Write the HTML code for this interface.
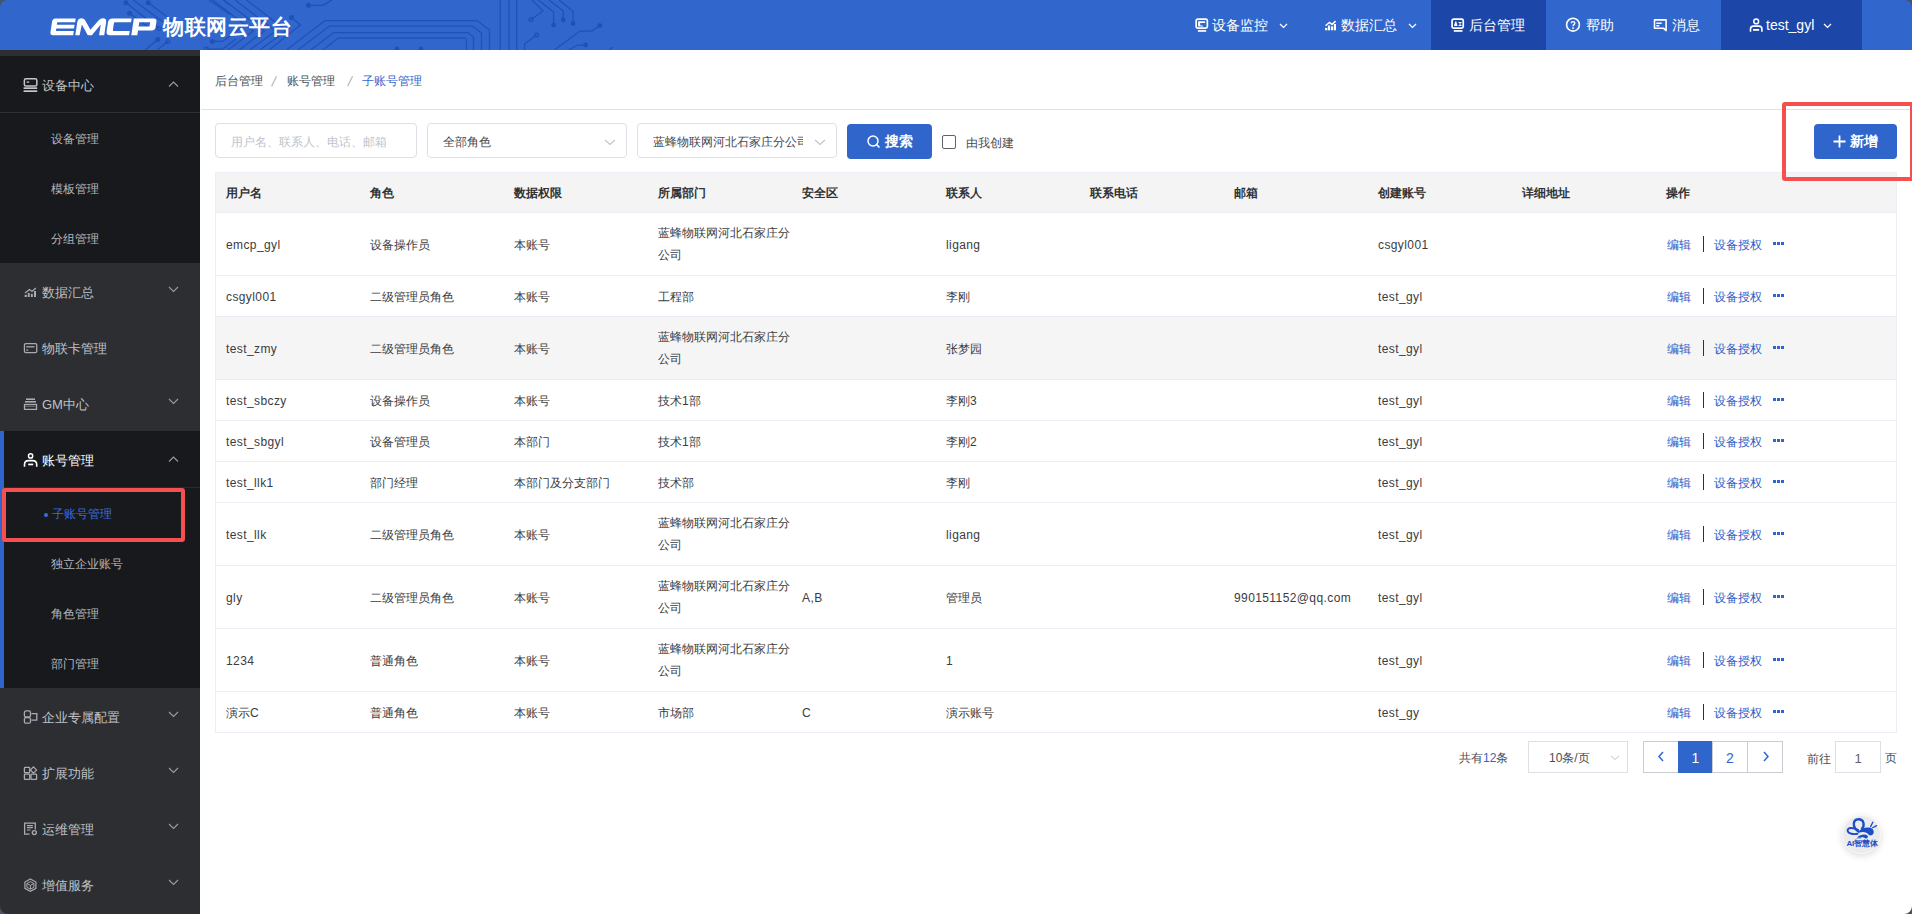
<!DOCTYPE html><html><head><meta charset="utf-8"><style>
*{margin:0;padding:0;box-sizing:border-box}
html,body{width:1912px;height:914px;overflow:hidden;background:#44546a;font-family:"Liberation Sans",sans-serif;}
.abs{position:absolute}
#hdr{position:absolute;left:0;top:0;width:1912px;height:50px;background:#3166cd;border-radius:8px 8px 0 0;overflow:hidden}
.nav{position:absolute;top:0;height:50px;color:#fff;font-size:14px;font-weight:500;white-space:nowrap}
.nav.act{background:#1c47a8}
.nav span{position:absolute;top:0;line-height:50px}
.nav svg{position:absolute}
#side{position:absolute;left:0;top:50px;width:200px;height:864px;background:#2d2e32;overflow:hidden;border-radius:0 0 0 8px}
#side>svg{position:absolute;z-index:2}
.mi{position:absolute;left:0;width:200px;height:56px;color:#bfc1c7;font-size:13px;line-height:56px}
.mi .t{position:absolute;left:42px;top:2px}
.mi svg{position:absolute}
.si{position:absolute;left:0;width:200px;height:50px;color:#b4b6bc;font-size:12px;line-height:50px}
.si .t{position:absolute;left:51px;top:1px}
#main{position:absolute;left:200px;top:50px;width:1712px;height:864px;background:#fff;border-radius:0 0 8px 0;overflow:hidden}
.bc{position:absolute;top:1px;font-size:12px;line-height:60px;color:#4d4f55;white-space:nowrap}
.inp{position:absolute;top:73px;height:35px;border:1px solid #dcdfe6;border-radius:4px;background:#fff;font-size:12px;line-height:36px;color:#45474d;overflow:hidden;white-space:nowrap}
.btn{position:absolute;top:74px;height:35px;background:#3066cc;border-radius:4px;color:#fff;font-size:14px;font-weight:bold;white-space:nowrap}
.btn span{position:absolute;top:0;line-height:35px}
.btn svg{position:absolute}
#tbl{position:absolute;left:15px;top:122px;width:1682px;border-left:1px solid #ebeef5;border-right:1px solid #ebeef5;border-top:1px solid #ebeef5}
.row{position:relative;width:100%;border-bottom:1px solid #ebeef5;background:#fff}
.row.h{background:#f4f4f5}
.row.hov{background:#f5f5f6}
.c{position:absolute;top:0;font-size:12px;color:#3a3c42;line-height:22px;white-space:nowrap;margin-top:1px}
.lt{letter-spacing:0.4px}
.row.h .c{color:#303133;font-weight:bold}
.op{color:#2b5dc8}
.pg{position:absolute;top:691px;height:32px;border:1px solid #c9ccd2;background:#fff;font-size:14px;line-height:33px;text-align:center;color:#3066cc}
</style></head><body>
<div id="hdr">
<svg style="position:absolute;left:0;top:0" width="700" height="50" viewBox="0 0 700 50"><g fill="none" stroke="#1f51b9" stroke-width="1.25">
<path d="M126 2.8 L159 28.6"/>
<path d="M133.2 0 L170 27"/>
<path d="M148.3 2.8 L184 29.5"/>
<path d="M129.5 13.2 L150 28.6"/>
<path d="M157.7 39.5 L145.2 50"/>
<path d="M167.8 41.4 L157.1 50"/>
<path d="M212.3 41.4 H222.6 L246 24"/>
<path d="M206.5 49 H222.6 L236 39"/>
<path d="M209.2 0 L230 14.4 M223 0 L230 5"/>
<path d="M212.6 0 L253.2 30.9 L228 50"/>
<path d="M223.9 0 L264.4 30.9 L239 50"/>
<path d="M235.2 0 L275.5 30.9 L250 50"/>
<path d="M246.5 0 L286.2 30.6 L260 50"/>
<path d="M291.6 17.6 L300.4 25.1 L269 50"/>
<path d="M308.5 5.3 L323 5.3 L332 0"/>
<path d="M286.6 50 L325 20.5 H477 L489.5 30 V50"/>
<path d="M298 50 L329.4 26 H472.6 L481.5 33 V50"/>
<path d="M310.7 50 L333.8 32.5 H468 L473.5 37 V50"/>
<path d="M323 50 L338 38 H465.5 L466.5 41 V50"/>
<path d="M500.2 0 V50 M509 0 V50 M516.7 0 V50"/>
<path d="M532 0 L543 11 L531 19.5"/>
<path d="M538.4 0 L553.6 12 V25"/>
<path d="M549 0 L563.3 11 V20"/>
<path d="M559 0 L573 11.5 V23.5"/>
<path d="M536.7 35 L524.6 44 V50"/>
<path d="M599.8 25.6 L591.8 31 H580 L554.4 50"/>
<path d="M585.6 45 H577.6 L568.7 50"/>
<path d="M613 47 L609 50"/>
</g>
<g fill="#1f51b9">
<circle cx="126" cy="2.8" r="2.5"/><circle cx="148.3" cy="2.8" r="2.5"/><circle cx="129.5" cy="13.2" r="2.5"/><circle cx="157.7" cy="39.5" r="2.5"/><circle cx="212.3" cy="41.4" r="2.5"/><circle cx="291.6" cy="17.6" r="2.5"/><circle cx="308.5" cy="5.3" r="2.5"/>
<circle cx="553.6" cy="25" r="2.4"/><circle cx="563.3" cy="20" r="2.4"/><circle cx="573" cy="23.5" r="2.4"/><circle cx="599.8" cy="25.6" r="2.4"/><circle cx="585.6" cy="45" r="2.4"/><circle cx="397" cy="49" r="2.4"/><circle cx="421" cy="49" r="2.4"/>
</g>
<g fill="none" stroke="#1f51b9" stroke-width="1.25"><circle cx="159" cy="28.6" r="1.9"/><circle cx="167.8" cy="41.4" r="1.9"/><circle cx="206.5" cy="49" r="1.9"/><circle cx="531" cy="19.5" r="1.9"/><circle cx="536.7" cy="35" r="1.9"/></g>
</svg>

<svg style="position:absolute;left:0;top:0" width="300" height="50" viewBox="0 0 300 50"><g transform="translate(5.3 0) skewX(-8.53)" fill="#fff">
<path d="M53 18.4 H73.2 V22.3 H55.3 V24.8 H73 V28.6 H55.3 V31.1 H73.2 V35.3 H53 Q50 35.3 50 32.3 V21.4 Q50 18.4 53 18.4 Z"/>
<path d="M75.3 35.3 L75.3 22.5 Q75.3 18.2 79.3 18.2 Q81.8 18.2 83.2 20.8 L89.6 29.7 L96.3 20.6 Q97.8 18.2 100.5 18.2 Q104.2 18.2 104.2 22.5 L104.2 35.3 L99.1 35.3 L99.1 24.4 L91.9 35.3 L87.8 35.3 L80.2 24.4 L79.6 35.3 Z"/>
<path d="M110 18.4 H129.1 V22.3 H113.1 Q112.1 22.3 112.1 23.3 V30.1 Q112.1 31.1 113.1 31.1 H129.1 V35.3 H110 Q106 35.3 106 31.3 V22.4 Q106 18.4 110 18.4 Z"/>
<path fill-rule="evenodd" d="M131.3 35.3 V18.4 H151 Q154.4 18.4 154.4 21.8 V27 Q154.4 30.4 151 30.4 H137.3 V35.3 Z M137.3 22.3 H148.2 V26.5 H137.3 Z"/>
</g></svg>

<div class="abs" style="left:163px;top:0;line-height:54px;font-size:21px;font-weight:bold;color:#fff;letter-spacing:0.5px">物联网云平台</div>
<div class="nav" style="left:1175px;width:130px"><svg style="left:20px;top:18px" width="14" height="14" viewBox="0 0 14 14"><rect x="1.15" y="1.15" width="11.2" height="9" rx="1.6" fill="none" stroke="#fff" stroke-width="1.7"/><path d="M3.1 3.3 H10.1 V4.9 H5.2 V7.5 H7.9 V8.6 H3.1 Z" fill="#fff"/><rect x="2.9" y="12.1" width="8.3" height="1.7" fill="#fff"/></svg><span style="left:37px">设备监控</span><svg style="left:104px;top:23px" width="9" height="6" viewBox="0 0 9 6"><path d="M1 1 L4.5 4.5 L8 1" fill="none" stroke="#fff" stroke-width="1.2"/></svg></div>
<div class="nav" style="left:1305px;width:126px"><svg style="left:20px;top:20px" width="12" height="11" viewBox="0 0 12 11"><rect x="0.1" y="7.9" width="2.2" height="2.4" fill="#fff"/><rect x="2.9" y="5.5" width="2.2" height="4.8" fill="#fff"/><rect x="6" y="6.4" width="2.2" height="3.9" fill="#fff"/><rect x="8.9" y="4" width="2.1" height="6.3" fill="#fff"/><path d="M0.5 5.7 L4.4 2.4 L7.1 4.4 L10.6 1.1" fill="none" stroke="#fff" stroke-width="1.5"/></svg><span style="left:36px">数据汇总</span><svg style="left:103px;top:23px" width="9" height="6" viewBox="0 0 9 6"><path d="M1 1 L4.5 4.5 L8 1" fill="none" stroke="#fff" stroke-width="1.2"/></svg></div>
<div class="nav act" style="left:1431px;width:115px"><svg style="left:20px;top:18px" width="14" height="14" viewBox="0 0 14 14"><rect x="1.05" y="1.15" width="11.2" height="9" rx="1.6" fill="none" stroke="#fff" stroke-width="1.7"/><path d="M3 7.9 L4.2 3.6 H5.3 L6.5 7.9 Z" fill="#fff"/><path d="M7.6 3.9 H10.6 V4.9 H9.6 V6.9 H10.6 V7.9 H7.6 V6.9 H8.6 V4.9 H7.6 Z" fill="#fff"/><rect x="2.8" y="12.1" width="8.7" height="1.7" fill="#fff"/></svg><span style="left:38px">后台管理</span></div>
<div class="nav" style="left:1546px;width:87px"><svg style="left:19px;top:17px" width="16" height="16" viewBox="0 0 16 16"><circle cx="8" cy="7.7" r="6.4" fill="none" stroke="#fff" stroke-width="1.6"/><path d="M6.2 6.2 Q6.2 4.6 8 4.6 Q9.8 4.6 9.8 6.1 Q9.8 7 8.9 7.6 Q8 8.2 8 9.3" fill="none" stroke="#fff" stroke-width="1.4"/><rect x="7.2" y="10.3" width="1.6" height="1.6" fill="#fff"/></svg><span style="left:40px">帮助</span></div>
<div class="nav" style="left:1633px;width:88px"><svg style="left:20px;top:18px" width="15" height="14" viewBox="0 0 15 14"><path d="M1.5 1.9 H13.1 V12.6 L10.6 10.3 H1.5 Z" fill="none" stroke="#fff" stroke-width="1.6" stroke-linejoin="round"/><path d="M3.3 5.3 H8.7 M3.3 7.7 H6.3" stroke="#fff" stroke-width="1.5"/></svg><span style="left:39px">消息</span></div>
<div class="nav act" style="left:1721px;width:141px"><svg style="left:28px;top:17px" width="15" height="16" viewBox="0 0 15 16"><circle cx="7.2" cy="4.4" r="2.4" fill="none" stroke="#fff" stroke-width="1.5"/><path d="M1.5 14.8 V12 Q1.5 9.1 4.4 9.1 H10 Q12.9 9.1 12.9 12 V14.8" fill="none" stroke="#fff" stroke-width="1.6"/><rect x="4" y="12" width="6.1" height="1.8" fill="#fff"/></svg><span style="left:45px">test_gyl</span><svg style="left:102px;top:23px" width="9" height="6" viewBox="0 0 9 6"><path d="M1 1 L4.5 4.5 L8 1" fill="none" stroke="#fff" stroke-width="1.2"/></svg></div>
</div>
<div id="side">
<div class="abs" style="left:0;top:6px;width:200px;height:207px;background:#18191c"></div>
<div class="mi" style="top:6px;background:#18191c;color:#bfc1c7"><span class="t">设备中心</span><svg style="left:168px;top:25px" width="11" height="7" viewBox="0 0 11 7"><path d="M1 5.5 L5.5 1 L10 5.5" fill="none" stroke="#9a9ca3" stroke-width="1.1"/></svg></div><svg style="left:23px;top:27px" width="15" height="16" viewBox="0 0 15 16"><rect x="1.35" y="1.85" width="12.5" height="7.2" rx="1.6" fill="none" stroke="#c4c6cc" stroke-width="1.5"/><rect x="3.6" y="4.4" width="2.6" height="1.3" fill="#c4c6cc"/><rect x="0.6" y="10.3" width="13.6" height="1.7" fill="#c4c6cc"/><rect x="0.6" y="13.3" width="13.6" height="1.7" fill="#c4c6cc"/></svg>
<div class="abs" style="left:0;top:62px;width:200px;height:1px;background:#2f3034"></div>
<div class="si" style="top:63px;color:#b4b6bc"><span class="t">设备管理</span></div>
<div class="si" style="top:113px;color:#b4b6bc"><span class="t">模板管理</span></div>
<div class="si" style="top:163px;color:#b4b6bc"><span class="t">分组管理</span></div>
<div class="mi" style="top:213px;color:#bfc1c7"><span class="t">数据汇总</span><svg style="left:168px;top:23px" width="11" height="7" viewBox="0 0 11 7"><path d="M1 1 L5.5 5.5 L10 1" fill="none" stroke="#9a9ca3" stroke-width="1.1"/></svg></div><svg style="left:24px;top:237px" width="13" height="11" viewBox="0 0 13 11"><rect x="0.65" y="7.8" width="2.2" height="2.2" fill="#a9abb2"/><rect x="3.8" y="5.9" width="1.9" height="4.1" fill="#a9abb2"/><rect x="6.9" y="6.8" width="1.9" height="3.2" fill="#a9abb2"/><rect x="10" y="4" width="2" height="6" fill="#a9abb2"/><path d="M1 6 L5.5 2.5 L8 4.5 L11.8 1" fill="none" stroke="#a9abb2" stroke-width="1.3"/></svg>
<div class="mi" style="top:269px;color:#bfc1c7"><span class="t">物联卡管理</span></div><svg style="left:23px;top:292px" width="15" height="12" viewBox="0 0 15 12"><rect x="1.45" y="1.55" width="12.3" height="9" rx="1.4" fill="none" stroke="#a9abb2" stroke-width="1.3"/><path d="M3.3 4.8 H11.6" stroke="#a9abb2" stroke-width="1.3"/><rect x="3.3" y="7.5" width="1.8" height="1.3" fill="#a9abb2"/></svg>
<div class="mi" style="top:325px;color:#bfc1c7"><span class="t">GM中心</span><svg style="left:168px;top:23px" width="11" height="7" viewBox="0 0 11 7"><path d="M1 1 L5.5 5.5 L10 1" fill="none" stroke="#9a9ca3" stroke-width="1.1"/></svg></div><svg style="left:23px;top:348px" width="15" height="12" viewBox="0 0 15 12"><rect x="3" y="0.4" width="9" height="1.6" fill="#a9abb2"/><rect x="2" y="3" width="11" height="1.6" fill="#a9abb2"/><rect x="1.5" y="6.5" width="12" height="4.9" fill="none" stroke="#a9abb2" stroke-width="1.3"/><path d="M2.5 8.4 H12.5" stroke="#a9abb2" stroke-width="1" stroke-dasharray="1 1"/></svg>
<div class="abs" style="left:0;top:381px;width:200px;height:257px;background:#18191c"></div>
<div class="abs" style="left:0;top:381px;width:4px;height:257px;background:#3066cc"></div>
<div class="mi" style="top:381px;color:#fff"><span class="t">账号管理</span><svg style="left:168px;top:25px" width="11" height="7" viewBox="0 0 11 7"><path d="M1 5.5 L5.5 1 L10 5.5" fill="none" stroke="#9a9ca3" stroke-width="1.1"/></svg></div><svg style="left:23px;top:403px" width="15" height="15" viewBox="0 0 15 15"><circle cx="7.6" cy="2.9" r="2.1" fill="none" stroke="#fff" stroke-width="1.5"/><path d="M1.5 13.8 V11.5 Q1.5 7.6 5.6 7.6 H9.6 Q13.7 7.6 13.7 11.5 V13.8" fill="none" stroke="#fff" stroke-width="1.6"/><rect x="5.2" y="10.6" width="5" height="1.7" fill="#fff"/></svg>
<div class="abs" style="left:4px;top:437px;width:196px;height:1px;background:#2a2b2f"></div>
<div class="si" style="top:438px;color:#3066cc"><div class="abs" style="left:44px;top:25px;width:4px;height:4px;border-radius:2px;background:#3a6ddb"></div><span class="t" style="top:1px;left:52px;color:#3a6ddb">子账号管理</span></div>
<div class="si" style="top:488px;color:#b4b6bc"><span class="t">独立企业账号</span></div>
<div class="si" style="top:538px;color:#b4b6bc"><span class="t">角色管理</span></div>
<div class="si" style="top:588px;color:#b4b6bc"><span class="t">部门管理</span></div>
<div class="mi" style="top:638px;color:#bfc1c7"><span class="t">企业专属配置</span><svg style="left:168px;top:23px" width="11" height="7" viewBox="0 0 11 7"><path d="M1 1 L5.5 5.5 L10 1" fill="none" stroke="#9a9ca3" stroke-width="1.1"/></svg></div><svg style="left:23px;top:660px" width="15" height="14" viewBox="0 0 15 14"><rect x="1.4" y="0.9" width="6.1" height="6" rx="1.5" fill="none" stroke="#a9abb2" stroke-width="1.3"/><rect x="1.4" y="7.6" width="6.1" height="5.6" rx="1.5" fill="none" stroke="#a9abb2" stroke-width="1.3"/><path d="M8.5 3.6 H13.8 V10.1 H8.5" fill="none" stroke="#a9abb2" stroke-width="1.3"/></svg>
<div class="mi" style="top:694px;color:#bfc1c7"><span class="t">扩展功能</span><svg style="left:168px;top:23px" width="11" height="7" viewBox="0 0 11 7"><path d="M1 1 L5.5 5.5 L10 1" fill="none" stroke="#9a9ca3" stroke-width="1.1"/></svg></div><svg style="left:23px;top:716px" width="15" height="14" viewBox="0 0 15 14"><rect x="1.4" y="1.4" width="5.3" height="5.3" rx="0.8" fill="none" stroke="#a9abb2" stroke-width="1.3"/><path d="M10.5 0.9 L13.6 4 L10.5 7.1 L7.4 4 Z" fill="none" stroke="#a9abb2" stroke-width="1.2"/><rect x="1.4" y="8.2" width="5.3" height="5.3" rx="0.8" fill="none" stroke="#a9abb2" stroke-width="1.3"/><rect x="8" y="8.2" width="5.6" height="5.3" rx="0.8" fill="none" stroke="#a9abb2" stroke-width="1.3"/></svg>
<div class="mi" style="top:750px;color:#bfc1c7"><span class="t">运维管理</span><svg style="left:168px;top:23px" width="11" height="7" viewBox="0 0 11 7"><path d="M1 1 L5.5 5.5 L10 1" fill="none" stroke="#9a9ca3" stroke-width="1.1"/></svg></div><svg style="left:23px;top:772px" width="15" height="14" viewBox="0 0 15 14"><path d="M12.3 7.5 V1.1 H1.6 V12.2 H6.5" fill="none" stroke="#a9abb2" stroke-width="1.3"/><path d="M4 3.7 H9.9 M4 5.6 H9.9 M4 8 H7.5" stroke="#a9abb2" stroke-width="1.2"/><circle cx="11.3" cy="10.6" r="2" fill="none" stroke="#a9abb2" stroke-width="1.4"/></svg>
<div class="mi" style="top:806px;color:#bfc1c7"><span class="t">增值服务</span><svg style="left:168px;top:23px" width="11" height="7" viewBox="0 0 11 7"><path d="M1 1 L5.5 5.5 L10 1" fill="none" stroke="#9a9ca3" stroke-width="1.1"/></svg></div><svg style="left:24px;top:828px" width="13" height="14" viewBox="0 0 13 14"><path d="M6.4 1 L11.9 4 V10.3 L6.4 13.3 L0.9 10.3 V4 Z" fill="none" stroke="#a9abb2" stroke-width="1.2"/><path d="M6.4 3.6 L9.9 5.5 V9.3 L6.4 11.2 L2.9 9.3 V5.5 Z" fill="none" stroke="#a9abb2" stroke-width="1"/><path d="M2.9 5.5 L6.4 7.4 L9.9 5.5 M6.4 7.4 V11.2" fill="none" stroke="#a9abb2" stroke-width="1"/></svg>
<div class="abs" style="left:2px;top:438px;width:183px;height:54px;border:4px solid #f45050;border-radius:3px;z-index:5"></div>
</div>
<div id="main">
<div class="bc" style="left:15px">后台管理</div>
<svg class="abs" style="left:70px;top:25px" width="8" height="12" viewBox="0 0 8 12"><path d="M6.6 1.3 L1.6 11.3" stroke="#b8bcc3" stroke-width="1.3"/></svg>
<div class="bc" style="left:87px">账号管理</div>
<svg class="abs" style="left:146px;top:25px" width="8" height="12" viewBox="0 0 8 12"><path d="M6.6 1.3 L1.6 11.3" stroke="#b8bcc3" stroke-width="1.3"/></svg>
<div class="bc" style="left:162px;color:#3066cc">子账号管理</div>
<div class="abs" style="left:1px;top:59px;width:1711px;height:1px;background:#dfe1e6"></div>
<div class="inp" style="left:15px;width:202px;padding-left:15px;color:#c0c4cc">用户名、联系人、电话、邮箱</div>
<div class="inp" style="left:227px;width:200px;padding-left:15px">全部角色<svg style="position:absolute;left:176px;top:15px" width="12" height="7" viewBox="0 0 12 7"><path d="M1 1 L6.0 5.5 L11 1" fill="none" stroke="#c0c4cc" stroke-width="1.1"/></svg></div>
<div class="inp" style="left:437px;width:200px;padding-left:15px"><div style="width:150px;overflow:hidden">蓝蜂物联网河北石家庄分公司</div><svg style="position:absolute;left:176px;top:15px" width="12" height="7" viewBox="0 0 12 7"><path d="M1 1 L6.0 5.5 L11 1" fill="none" stroke="#c0c4cc" stroke-width="1.1"/></svg></div>
<div class="btn" style="left:647px;width:85px"><svg style="left:20px;top:11px" width="14" height="14" viewBox="0 0 14 14"><circle cx="6" cy="6" r="5" fill="none" stroke="#fff" stroke-width="1.5"/><path d="M9.6 9.6 L12.5 12.5" stroke="#fff" stroke-width="1.6"/></svg><span style="left:38px">搜索</span></div>
<div class="abs" style="left:742px;top:85px;width:14px;height:14px;border:1px solid #606266;border-radius:2px;background:#fff"></div>
<div class="abs" style="left:766px;top:81px;font-size:12px;line-height:24px;color:#4a4c52">由我创建</div>
<div class="btn" style="left:1614px;width:83px"><svg style="left:19px;top:11px" width="13" height="13" viewBox="0 0 13 13"><path d="M6.5 0.5V12.5M0.5 6.5H12.5" stroke="#fff" stroke-width="1.8"/></svg><span style="left:36px">新增</span></div>
<div class="abs" style="left:1582px;top:52px;width:132px;height:79px;border:4px solid #f45050;border-radius:3px;z-index:5"></div>
<div id="tbl">
<div class="row h" style="height:40px"><div class="c" style="left:10px;top:8px">用户名</div><div class="c" style="left:154px;top:8px">角色</div><div class="c" style="left:298px;top:8px">数据权限</div><div class="c" style="left:442px;top:8px">所属部门</div><div class="c" style="left:586px;top:8px">安全区</div><div class="c" style="left:730px;top:8px">联系人</div><div class="c" style="left:874px;top:8px">联系电话</div><div class="c" style="left:1018px;top:8px">邮箱</div><div class="c" style="left:1162px;top:8px">创建账号</div><div class="c" style="left:1306px;top:8px">详细地址</div><div class="c" style="left:1450px;top:8px">操作</div></div>
<div class="row" style="height:63px"><div class="c" style="left:10px;top:20px"><span class="lt">emcp_gyl</span></div><div class="c" style="left:154px;top:20px">设备操作员</div><div class="c" style="left:298px;top:20px">本账号</div><div class="c" style="left:442px;top:8px">蓝蜂物联网河北石家庄分<br>公司</div><div class="c" style="left:730px;top:20px"><span class="lt">ligang</span></div><div class="c" style="left:1162px;top:20px"><span class="lt">csgyl001</span></div><div class="c op" style="left:1451px;top:20px">编辑</div><div class="abs" style="left:1487px;top:23px;width:1px;height:16px;background:#303133"></div><div class="c op" style="left:1498px;top:20px">设备授权</div><div class="abs" style="left:1557px;top:29px;width:3px;height:3px;background:#3066cc;box-shadow:4px 0 0 #3066cc,8px 0 0 #3066cc"></div></div>
<div class="row" style="height:41px"><div class="c" style="left:10px;top:9px"><span class="lt">csgyl001</span></div><div class="c" style="left:154px;top:9px">二级管理员角色</div><div class="c" style="left:298px;top:9px">本账号</div><div class="c" style="left:442px;top:9px">工程部</div><div class="c" style="left:730px;top:9px">李刚</div><div class="c" style="left:1162px;top:9px"><span class="lt">test_gyl</span></div><div class="c op" style="left:1451px;top:9px">编辑</div><div class="abs" style="left:1487px;top:12px;width:1px;height:16px;background:#303133"></div><div class="c op" style="left:1498px;top:9px">设备授权</div><div class="abs" style="left:1557px;top:18px;width:3px;height:3px;background:#3066cc;box-shadow:4px 0 0 #3066cc,8px 0 0 #3066cc"></div></div>
<div class="row hov" style="height:63px"><div class="c" style="left:10px;top:20px"><span class="lt">test_zmy</span></div><div class="c" style="left:154px;top:20px">二级管理员角色</div><div class="c" style="left:298px;top:20px">本账号</div><div class="c" style="left:442px;top:8px">蓝蜂物联网河北石家庄分<br>公司</div><div class="c" style="left:730px;top:20px">张梦园</div><div class="c" style="left:1162px;top:20px"><span class="lt">test_gyl</span></div><div class="c op" style="left:1451px;top:20px">编辑</div><div class="abs" style="left:1487px;top:23px;width:1px;height:16px;background:#303133"></div><div class="c op" style="left:1498px;top:20px">设备授权</div><div class="abs" style="left:1557px;top:29px;width:3px;height:3px;background:#3066cc;box-shadow:4px 0 0 #3066cc,8px 0 0 #3066cc"></div></div>
<div class="row" style="height:41px"><div class="c" style="left:10px;top:9px"><span class="lt">test_sbczy</span></div><div class="c" style="left:154px;top:9px">设备操作员</div><div class="c" style="left:298px;top:9px">本账号</div><div class="c" style="left:442px;top:9px">技术1部</div><div class="c" style="left:730px;top:9px">李刚3</div><div class="c" style="left:1162px;top:9px"><span class="lt">test_gyl</span></div><div class="c op" style="left:1451px;top:9px">编辑</div><div class="abs" style="left:1487px;top:12px;width:1px;height:16px;background:#303133"></div><div class="c op" style="left:1498px;top:9px">设备授权</div><div class="abs" style="left:1557px;top:18px;width:3px;height:3px;background:#3066cc;box-shadow:4px 0 0 #3066cc,8px 0 0 #3066cc"></div></div>
<div class="row" style="height:41px"><div class="c" style="left:10px;top:9px"><span class="lt">test_sbgyl</span></div><div class="c" style="left:154px;top:9px">设备管理员</div><div class="c" style="left:298px;top:9px">本部门</div><div class="c" style="left:442px;top:9px">技术1部</div><div class="c" style="left:730px;top:9px">李刚2</div><div class="c" style="left:1162px;top:9px"><span class="lt">test_gyl</span></div><div class="c op" style="left:1451px;top:9px">编辑</div><div class="abs" style="left:1487px;top:12px;width:1px;height:16px;background:#303133"></div><div class="c op" style="left:1498px;top:9px">设备授权</div><div class="abs" style="left:1557px;top:18px;width:3px;height:3px;background:#3066cc;box-shadow:4px 0 0 #3066cc,8px 0 0 #3066cc"></div></div>
<div class="row" style="height:41px"><div class="c" style="left:10px;top:9px"><span class="lt">test_llk1</span></div><div class="c" style="left:154px;top:9px">部门经理</div><div class="c" style="left:298px;top:9px">本部门及分支部门</div><div class="c" style="left:442px;top:9px">技术部</div><div class="c" style="left:730px;top:9px">李刚</div><div class="c" style="left:1162px;top:9px"><span class="lt">test_gyl</span></div><div class="c op" style="left:1451px;top:9px">编辑</div><div class="abs" style="left:1487px;top:12px;width:1px;height:16px;background:#303133"></div><div class="c op" style="left:1498px;top:9px">设备授权</div><div class="abs" style="left:1557px;top:18px;width:3px;height:3px;background:#3066cc;box-shadow:4px 0 0 #3066cc,8px 0 0 #3066cc"></div></div>
<div class="row" style="height:63px"><div class="c" style="left:10px;top:20px"><span class="lt">test_llk</span></div><div class="c" style="left:154px;top:20px">二级管理员角色</div><div class="c" style="left:298px;top:20px">本账号</div><div class="c" style="left:442px;top:8px">蓝蜂物联网河北石家庄分<br>公司</div><div class="c" style="left:730px;top:20px"><span class="lt">ligang</span></div><div class="c" style="left:1162px;top:20px"><span class="lt">test_gyl</span></div><div class="c op" style="left:1451px;top:20px">编辑</div><div class="abs" style="left:1487px;top:23px;width:1px;height:16px;background:#303133"></div><div class="c op" style="left:1498px;top:20px">设备授权</div><div class="abs" style="left:1557px;top:29px;width:3px;height:3px;background:#3066cc;box-shadow:4px 0 0 #3066cc,8px 0 0 #3066cc"></div></div>
<div class="row" style="height:63px"><div class="c" style="left:10px;top:20px"><span class="lt">gly</span></div><div class="c" style="left:154px;top:20px">二级管理员角色</div><div class="c" style="left:298px;top:20px">本账号</div><div class="c" style="left:442px;top:8px">蓝蜂物联网河北石家庄分<br>公司</div><div class="c" style="left:586px;top:20px"><span class="lt">A,B</span></div><div class="c" style="left:730px;top:20px">管理员</div><div class="c" style="left:1018px;top:20px"><span class="lt">990151152@qq.com</span></div><div class="c" style="left:1162px;top:20px"><span class="lt">test_gyl</span></div><div class="c op" style="left:1451px;top:20px">编辑</div><div class="abs" style="left:1487px;top:23px;width:1px;height:16px;background:#303133"></div><div class="c op" style="left:1498px;top:20px">设备授权</div><div class="abs" style="left:1557px;top:29px;width:3px;height:3px;background:#3066cc;box-shadow:4px 0 0 #3066cc,8px 0 0 #3066cc"></div></div>
<div class="row" style="height:63px"><div class="c" style="left:10px;top:20px"><span class="lt">1234</span></div><div class="c" style="left:154px;top:20px">普通角色</div><div class="c" style="left:298px;top:20px">本账号</div><div class="c" style="left:442px;top:8px">蓝蜂物联网河北石家庄分<br>公司</div><div class="c" style="left:730px;top:20px"><span class="lt">1</span></div><div class="c" style="left:1162px;top:20px"><span class="lt">test_gyl</span></div><div class="c op" style="left:1451px;top:20px">编辑</div><div class="abs" style="left:1487px;top:23px;width:1px;height:16px;background:#303133"></div><div class="c op" style="left:1498px;top:20px">设备授权</div><div class="abs" style="left:1557px;top:29px;width:3px;height:3px;background:#3066cc;box-shadow:4px 0 0 #3066cc,8px 0 0 #3066cc"></div></div>
<div class="row" style="height:41px"><div class="c" style="left:10px;top:9px">演示C</div><div class="c" style="left:154px;top:9px">普通角色</div><div class="c" style="left:298px;top:9px">本账号</div><div class="c" style="left:442px;top:9px">市场部</div><div class="c" style="left:586px;top:9px"><span class="lt">C</span></div><div class="c" style="left:730px;top:9px">演示账号</div><div class="c" style="left:1162px;top:9px"><span class="lt">test_gy</span></div><div class="c op" style="left:1451px;top:9px">编辑</div><div class="abs" style="left:1487px;top:12px;width:1px;height:16px;background:#303133"></div><div class="c op" style="left:1498px;top:9px">设备授权</div><div class="abs" style="left:1557px;top:18px;width:3px;height:3px;background:#3066cc;box-shadow:4px 0 0 #3066cc,8px 0 0 #3066cc"></div></div>
</div>
<div class="abs" style="left:1259px;top:698px;font-size:12px;line-height:20px;color:#4a4c52">共有<span style="color:#3066cc">12</span>条</div>
<div class="abs" style="left:1328px;top:691px;width:100px;height:32px;border:1px solid #dcdfe6;font-size:12px;line-height:32px;color:#4a4c52;padding-left:20px">10条/页<svg style="position:absolute;left:81px;top:13px" width="10" height="6" viewBox="0 0 10 6"><path d="M1 1 L5.0 4.5 L9 1" fill="none" stroke="#c0c4cc" stroke-width="1.0"/></svg></div>
<div class="pg" style="left:1443px;width:36px"><svg style="position:absolute;left:13px;top:9px" width="8" height="11" viewBox="0 0 8 11"><path d="M6 1 L2 5.5 L6 10" fill="none" stroke="#3066cc" stroke-width="1.5"/></svg></div>
<div class="pg" style="left:1478px;width:35px;background:#3066cc;color:#fff;border-color:#3066cc">1</div>
<div class="pg" style="left:1512px;width:36px">2</div>
<div class="pg" style="left:1547px;width:36px"><svg style="position:absolute;left:14px;top:9px" width="8" height="11" viewBox="0 0 8 11"><path d="M2 1 L6 5.5 L2 10" fill="none" stroke="#3066cc" stroke-width="1.5"/></svg></div>
<div class="abs" style="left:1607px;top:699px;font-size:12px;line-height:20px;color:#4a4c52">前往</div>
<div class="abs" style="left:1635px;top:691px;width:46px;height:32px;border:1px solid #dcdfe6;font-size:13px;line-height:33px;color:#606266;text-align:center">1</div>
<div class="abs" style="left:1685px;top:698px;font-size:12px;line-height:20px;color:#4a4c52">页</div>
<div class="abs" style="left:1642px;top:765px;width:39px;height:39px;border-radius:50%;background:#ebebed;border:1px solid #fafafa;box-shadow:0 2px 7px rgba(0,0,0,0.14);z-index:3"></div>
<svg class="abs" style="left:1642px;top:765.5px;z-index:4" width="40" height="36" viewBox="0 0 40 36"><g fill="none" stroke="#1c4ec7" stroke-linecap="round">
<path d="M16.5 15.5 C10.5 12 10 3.2 16.5 3.2 C22.5 3.2 22.5 10 20 12.5" stroke-width="2.4"/>
<path d="M16 13.8 C11 11.2 5.3 11.3 5.6 14.6 C6 18 12 18.6 15.5 17.8" stroke-width="1.9"/>
<path d="M28.6 10.6 L30.8 6.2 M30.6 11.8 L34.6 9.6" stroke-width="1.3"/>
</g><g fill="#1c4ec7">
<path d="M16.5 15.5 C19 12.5 23 11 27 11.5 C31 12 32.5 15 31.5 17.5 C30.5 19.5 28 19.8 27 19 C25 16 21 15 16.5 16.8 Z"/>
<path d="M15 21.5 C18 18.5 23 17.5 25.5 19.5 C26.5 20.5 25.5 22.5 24 22.8 C22 21 18.5 20.5 15 21.5 Z"/>
<path d="M13.5 23.2 C15.5 21.2 18.5 20.7 19.8 21.7 C19.6 22.5 18.5 22.3 17 22.3 C15.5 22.3 14.5 22.7 13.5 23.2 Z"/>
</g></svg>
<div class="abs" style="left:1643.5px;top:789px;width:37px;text-align:center;font-size:8px;line-height:9px;font-weight:bold;color:#1c4ec7;letter-spacing:-0.2px;z-index:4">AI智慧体</div>

</div>
</body></html>
